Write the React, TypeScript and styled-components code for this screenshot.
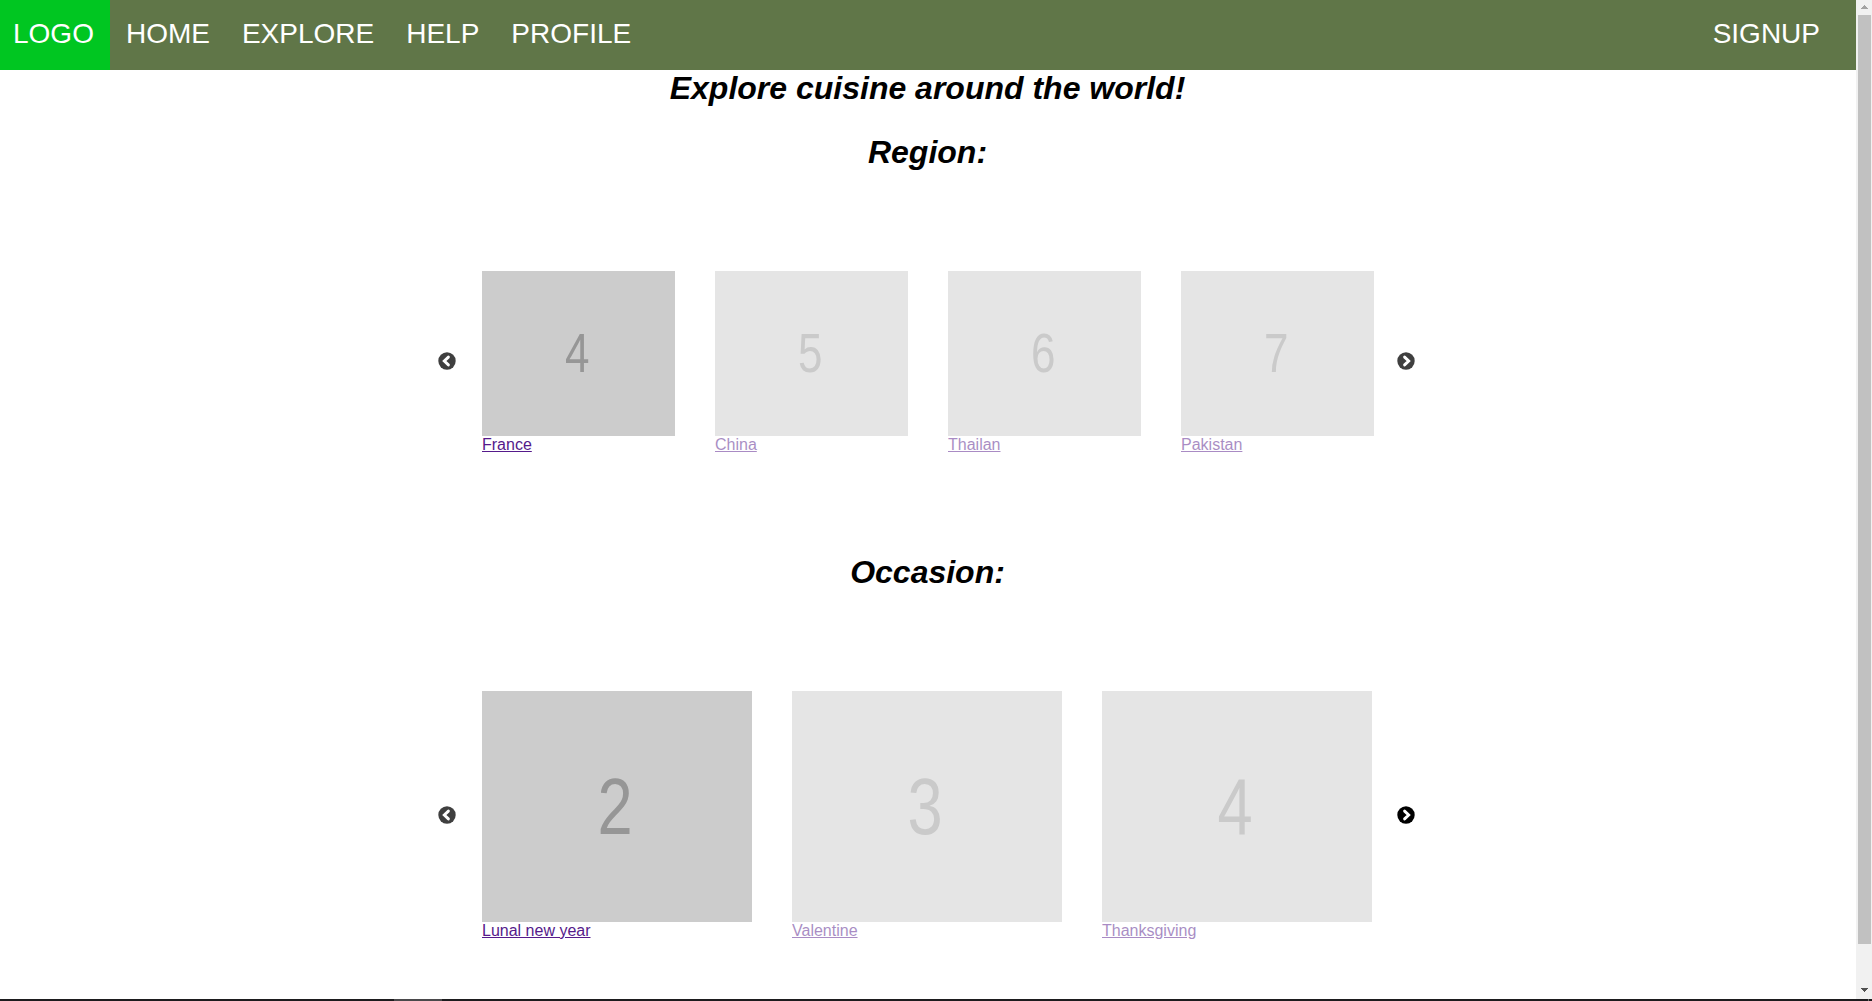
import React from "react";
import styled, { createGlobalStyle } from "styled-components";

const GlobalStyle = createGlobalStyle`
  *, *::before, *::after { box-sizing: border-box; }
  body {
    margin: 0;
    background: #fff;
    font-family: "Liberation Sans", Arial, sans-serif;
    font-size: 16px;
    overflow: hidden;
  }
`;

const Screen = styled.div`
  display: flex;
  flex-direction: column;
  height: 1001px;
  overflow: hidden;
`;

const Viewport = styled.div`
  display: flex;
  flex: 1;
  min-height: 0;
`;

const Page = styled.div`
  flex: 1;
  min-width: 0;
  overflow: hidden;
`;

const Nav = styled.nav`
  display: flex;
  height: 70px;
  padding-right: 20px;
  background: #607648;
`;

const NavLink = styled.a<{ $logo?: boolean; $end?: boolean }>`
  height: 70px;
  padding: ${(p) => (p.$logo ? "18px 16px 0 13px" : "18px 16px 0")};
  margin-left: ${(p) => (p.$end ? "auto" : "0")};
  background: ${(p) => (p.$logo ? "#00c621" : "transparent")};
  color: #fff;
  font-size: 28px;
  line-height: 32px;
  text-decoration: none;
`;

const Heading = styled.h2`
  margin: 0 0 28px;
  padding-right: 1px;
  font-size: 32px;
  font-style: italic;
  font-weight: bold;
  line-height: 36px;
  text-align: center;
`;

const Section = styled.section<{ $height: number }>`
  height: ${(p) => p.$height}px;
`;

const Carousel = styled.div<{ $height: number }>`
  display: flex;
  align-items: center;
  width: 977px;
  height: ${(p) => p.$height}px;
  margin: 101px 0 0 438px;
`;

const ArrowButton = styled.button<{ $active?: boolean; $next?: boolean }>`
  display: block;
  width: 18px;
  height: 18px;
  padding: 0;
  border: 0;
  background: none;
  color: #000;
  opacity: ${(p) => (p.$active ? 1 : 0.75)};
  margin-left: ${(p) => (p.$next ? "auto" : "0")};

  svg {
    display: block;
    transform: ${(p) => (p.$next ? "scaleX(-1)" : "none")};
  }
`;

const Slides = styled.div`
  display: flex;
  align-self: flex-start;
  gap: 40px;
  margin-left: 26px;
`;

const Slide = styled.div<{ $width: number; $faded: boolean }>`
  width: ${(p) => p.$width}px;
  opacity: ${(p) => (p.$faded ? 0.5 : 1)};
`;

const Placeholder = styled.div<{ $height: number; $shift: number }>`
  display: flex;
  align-items: center;
  justify-content: center;
  height: ${(p) => p.$height}px;
  padding-right: ${(p) => p.$shift}px;
  background: #ccc;
`;

const Digit = styled.span<{ $size: number }>`
  color: #969696;
  font-size: ${(p) => p.$size}px;
  line-height: 1;
  transform: scaleX(0.8);
`;

const Caption = styled.a`
  display: block;
  width: max-content;
  color: #551a8b;
  line-height: 18px;
  text-decoration: underline;
`;

const ScrollTrack = styled.div`
  display: flex;
  flex-direction: column;
  align-items: center;
  width: 16px;
  padding: 5px 0 7px;
  background: #f1f1f1;

  svg { display: block; }
`;

const Thumb = styled.div`
  width: 13px;
  height: 929px;
  margin: 6px 0 auto 1px;
  background: #c1c1c1;
`;

const TaskbarEdge = styled.div`
  display: flex;
  height: 2px;
  padding-left: 394px;
  background: #1d1c1e;
`;

const TaskbarItem = styled.div`
  width: 48px;
  background: #4a494b;
`;

const ShowDesktop = styled.div`
  width: 1px;
  margin: 0 3px 0 auto;
  background: #707070;
`;

interface Item {
  digit: string;
  label: string;
}

interface CarouselProps {
  items: Item[];
  width: number;
  height: number;
  rowHeight: number;
  digitSize: number;
  shift: number;
  nextActive?: boolean;
}

const regions: Item[] = [
  { digit: "4", label: "France" },
  { digit: "5", label: "China" },
  { digit: "6", label: "Thailan" },
  { digit: "7", label: "Pakistan" },
];

const occasions: Item[] = [
  { digit: "2", label: "Lunal new year" },
  { digit: "3", label: "Valentine" },
  { digit: "4", label: "Thanksgiving" },
];

const Chevron = () => (
  <svg width="18" height="18" viewBox="0 0 18 18" fill="none">
    <circle cx="9" cy="9" r="8.7" fill="currentColor" />
    <path
      d="M10.4 5.1 6.3 9l4.1 3.9"
      stroke="#fff"
      strokeWidth="2.9"
      strokeLinecap="round"
      strokeLinejoin="miter"
    />
  </svg>
);

const SlideRow = (p: CarouselProps) => (
  <Carousel $height={p.rowHeight}>
    <ArrowButton aria-label="Previous">
      <Chevron />
    </ArrowButton>
    <Slides>
      {p.items.map((item, i) => (
        <Slide key={item.label} $width={p.width} $faded={i > 0}>
          <Placeholder $height={p.height} $shift={p.shift}>
            <Digit $size={p.digitSize}>{item.digit}</Digit>
          </Placeholder>
          <Caption href="#">{item.label}</Caption>
        </Slide>
      ))}
    </Slides>
    <ArrowButton aria-label="Next" $next $active={p.nextActive}>
      <Chevron />
    </ArrowButton>
  </Carousel>
);

export default function App() {
  return (
    <Screen>
      <GlobalStyle />
      <Viewport>
        <Page>
          <Nav>
            <NavLink href="#" $logo>LOGO</NavLink>
            <NavLink href="#">HOME</NavLink>
            <NavLink href="#">EXPLORE</NavLink>
            <NavLink href="#">HELP</NavLink>
            <NavLink href="#">PROFILE</NavLink>
            <NavLink href="#" $end>SIGNUP</NavLink>
          </Nav>
          <Heading>Explore cuisine around the world!</Heading>
          <Section $height={420}>
            <Heading>Region:</Heading>
            <SlideRow items={regions} width={193} height={165} rowHeight={180} digitSize={55} shift={3} />
          </Section>
          <Section $height={445}>
            <Heading>Occasion:</Heading>
            <SlideRow items={occasions} width={270} height={231} rowHeight={248} digitSize={79} shift={5} nextActive />
          </Section>
        </Page>
        <ScrollTrack>
          <svg width="7" height="4" viewBox="0 0 7 4" shapeRendering="crispEdges">
            <path d="M3 0h1v1h1v1h1v1h1v1H0V3h1V2h1V1h1z" fill="#a3a3a3" />
          </svg>
          <Thumb />
          <svg width="7" height="4" viewBox="0 0 7 4" shapeRendering="crispEdges">
            <path d="M0 0h7v1H6v1H5v1H4v1H3V3H2V2H1V1H0z" fill="#505050" />
          </svg>
        </ScrollTrack>
      </Viewport>
      <TaskbarEdge>
        <TaskbarItem />
        <ShowDesktop />
      </TaskbarEdge>
    </Screen>
  );
}
